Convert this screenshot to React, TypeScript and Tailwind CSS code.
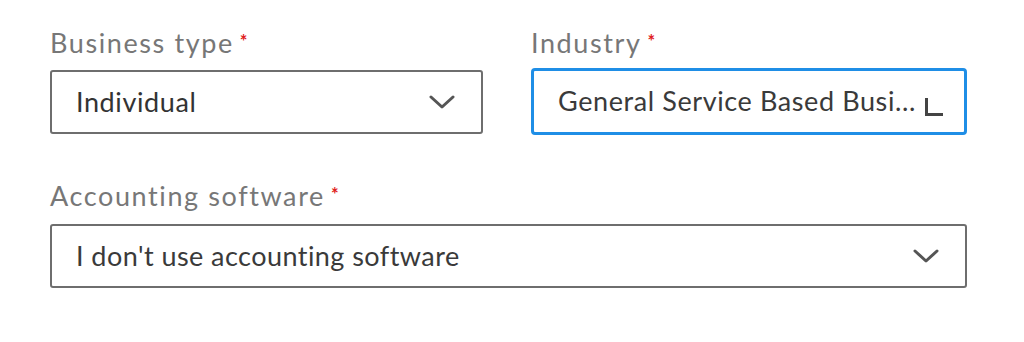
import React from "react";

const Chevron = () => (
  <svg width="26" height="16" viewBox="0 0 26 16" fill="none">
    <path d="M2 3 L13 13 L24 3" stroke="#555" strokeWidth="3" strokeLinecap="round" strokeLinejoin="round" />
  </svg>
);

const Label = ({ children }: { children: React.ReactNode }) => (
  <div className="text-[27px] leading-[30px] tracking-[1.6px] text-[#777] flex items-start">
    <span>{children}</span>
    <span className="text-[#e02020] text-[18px] leading-[18px] ml-[6px] mt-[4px] font-bold">*</span>
  </div>
);

export default function App() {
  return (
    <div className="w-[1024px] h-[342px] bg-white" style={{ fontFamily: "Lato, 'Open Sans', sans-serif" }}>
      <div className="pl-[50px] pt-[28px] w-[967px] flex flex-col">
        <div className="flex gap-[48px]">
          <div className="w-[433px] flex flex-col gap-[12px]">
            <Label>Business type</Label>
            <div className="h-[64px] border-2 border-[#6e6e6e] rounded-[3px] flex items-center justify-between pl-[24px] pr-[26px]">
              <span className="text-[27px] tracking-[0.6px] text-[#333]">Individual</span>
              <Chevron />
            </div>
          </div>
          <div className="w-[436px] flex flex-col gap-[10px]">
            <Label>Industry</Label>
            <div className="h-[67px] border-[3px] border-[#1f8ee6] rounded-[4px] flex items-center justify-between pl-[24px] pr-[21px]">
              <span className="text-[27px] tracking-[0.6px] text-[#3a3a3a] truncate">General Service Based Busi...</span>
              <svg width="18" height="18" viewBox="0 0 18 18" className="mt-[10px] shrink-0">
                <path d="M1.5 0 V16.5 H18" stroke="#444" strokeWidth="3" fill="none" />
              </svg>
            </div>
          </div>
        </div>
        <div className="mt-[46px] flex flex-col gap-[13px]">
          <Label>Accounting software</Label>
          <div className="h-[64px] border-2 border-[#6e6e6e] rounded-[3px] flex items-center justify-between pl-[24px] pr-[26px]">
            <span className="text-[27px] tracking-[0.45px] text-[#3a3a3a]">I don't use accounting software</span>
            <Chevron />
          </div>
        </div>
      </div>
    </div>
  );
}
